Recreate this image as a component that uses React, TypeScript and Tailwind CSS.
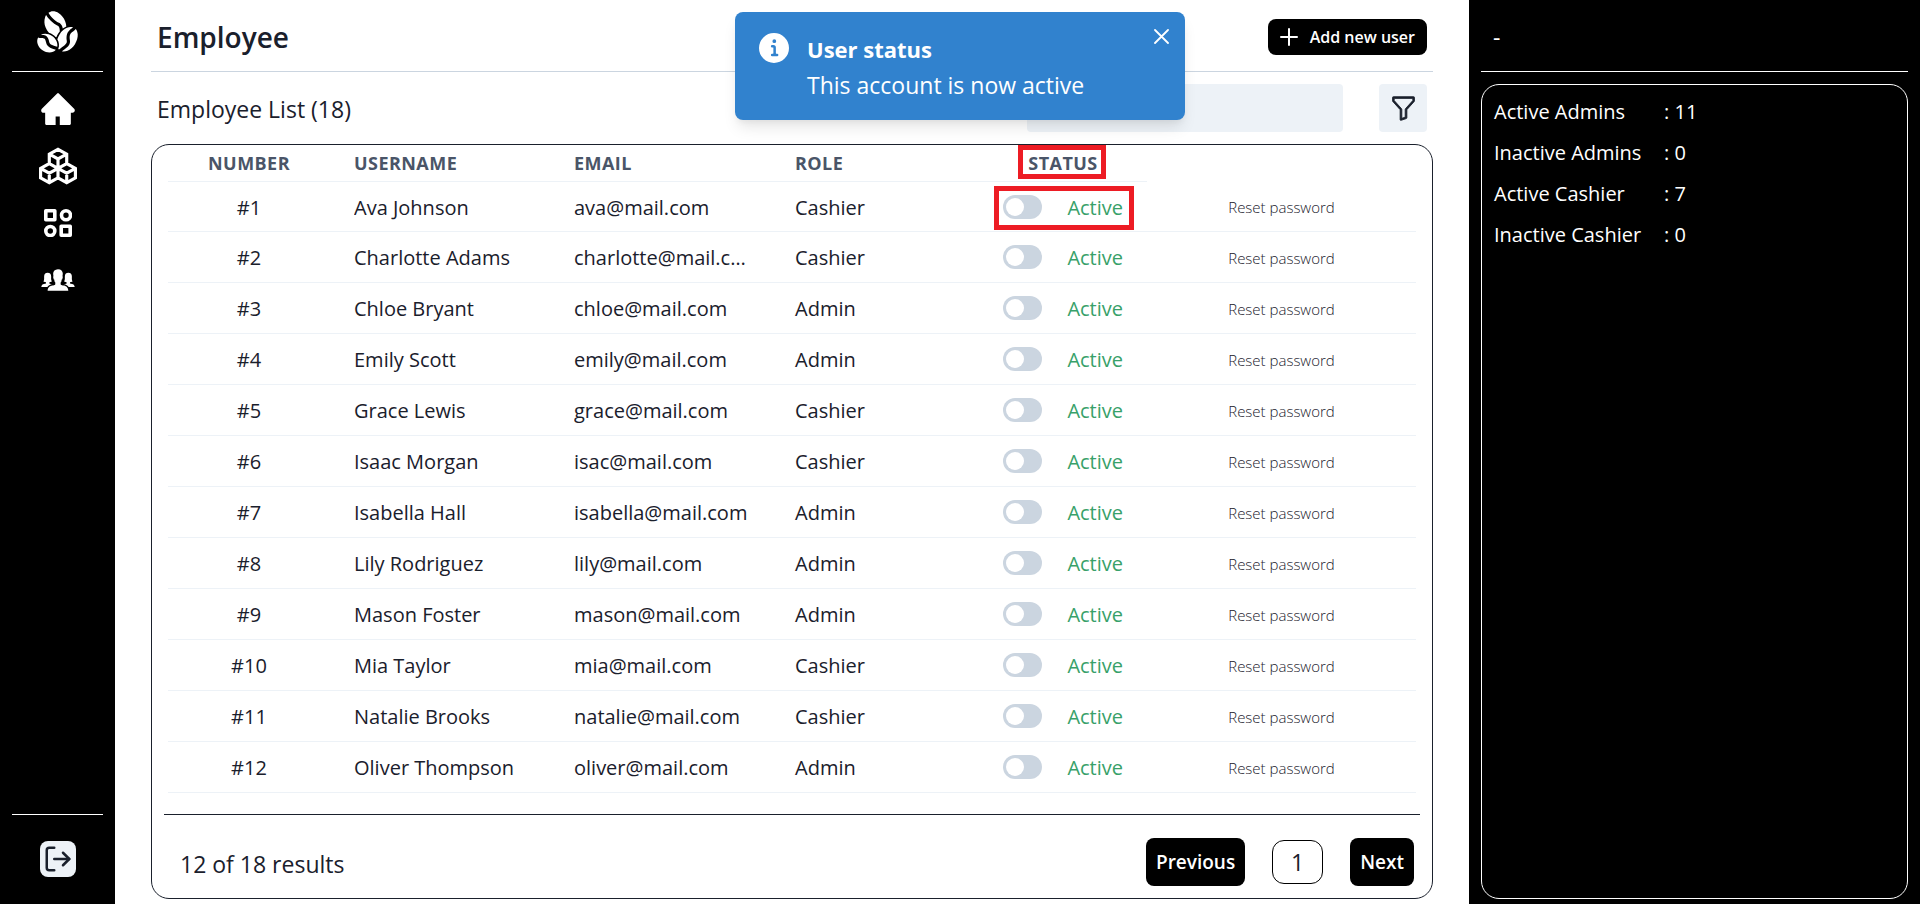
import React from "react";
import { GiCoffeeBeans } from "react-icons/gi";
import { AiFillHome } from "react-icons/ai";
import { GrCubes } from "react-icons/gr";
import { IoIosPeople } from "react-icons/io";
import { FiLogOut } from "react-icons/fi";
import { BsFunnel } from "react-icons/bs";

type Employee = { name: string; email: string; role: "Admin" | "Cashier" };

const employees: Employee[] = [
  { name: "Ava Johnson", email: "ava@mail.com", role: "Cashier" },
  { name: "Charlotte Adams", email: "charlotte@mail.com", role: "Cashier" },
  { name: "Chloe Bryant", email: "chloe@mail.com", role: "Admin" },
  { name: "Emily Scott", email: "emily@mail.com", role: "Admin" },
  { name: "Grace Lewis", email: "grace@mail.com", role: "Cashier" },
  { name: "Isaac Morgan", email: "isac@mail.com", role: "Cashier" },
  { name: "Isabella Hall", email: "isabella@mail.com", role: "Admin" },
  { name: "Lily Rodriguez", email: "lily@mail.com", role: "Admin" },
  { name: "Mason Foster", email: "mason@mail.com", role: "Admin" },
  { name: "Mia Taylor", email: "mia@mail.com", role: "Cashier" },
  { name: "Natalie Brooks", email: "natalie@mail.com", role: "Cashier" },
  { name: "Oliver Thompson", email: "oliver@mail.com", role: "Admin" },
];

const summary: [string, number][] = [
  ["Active Admins", 11],
  ["Inactive Admins", 0],
  ["Active Cashier", 7],
  ["Inactive Cashier", 0],
];

function CategoryIcon() {
  return (
    <svg viewBox="0 0 28 28" className="size-7" fill="none" stroke="currentColor" strokeWidth="3.6" strokeLinejoin="round" aria-hidden="true">
      <rect x="1.8" y="1.8" width="9" height="9" />
      <circle cx="22" cy="6.3" r="4.5" />
      <circle cx="6.3" cy="22" r="4.5" />
      <rect x="17.2" y="17.2" width="9" height="9" />
    </svg>
  );
}

function Sidebar() {
  return (
    <aside className="flex w-[115px] shrink-0 flex-col bg-black px-3 text-white">
      <div className="flex h-[72px] items-start justify-center border-b border-white pt-[9px]">
        <GiCoffeeBeans size={45} />
      </div>
      <nav className="flex flex-1 flex-col items-center gap-[17px] pt-[17px]">
        <a href="#home" aria-label="Home" className="flex h-10 items-center"><AiFillHome size={38} /></a>
        <a href="#products" aria-label="Products" className="flex h-10 items-center"><GrCubes size={38} /></a>
        <a href="#categories" aria-label="Categories" className="flex h-10 items-center"><CategoryIcon /></a>
        <a href="#employees" aria-label="Employees" className="flex h-10 items-center"><IoIosPeople size={38} /></a>
      </nav>
      <div className="flex h-[90px] items-start justify-center border-t border-white pt-[26px]">
        <button aria-label="Log out" className="flex size-9 items-center justify-center rounded-lg bg-[#edf2f7] text-[#1a202c]">
          <FiLogOut size={30} />
        </button>
      </div>
    </aside>
  );
}

function StatusSwitch({ name }: { name: string }) {
  return (
    <input
      type="checkbox"
      role="switch"
      aria-label={`Status of ${name}`}
      className="h-6 w-[39px] shrink-0 appearance-none rounded-full bg-[#cbd5e0] p-[3px] before:block before:size-[18px] before:rounded-full before:bg-white checked:bg-[#3182ce] checked:before:ml-auto"
    />
  );
}

const headCell = "h-[37px] border-b border-[#edf2f7] px-6 text-left align-middle text-[18px] font-bold tracking-wide";
const bodyCell = "border-b border-[#edf2f7] pl-6 pr-5 pt-0.5 align-middle";

function EmployeeTable() {
  return (
    <table className="w-full table-fixed border-separate border-spacing-0 text-xl leading-7">
      <colgroup>
        <col className="w-[162px]" />
        <col className="w-[220px]" />
        <col className="w-[221px]" />
        <col className="w-[208px]" />
        <col className="w-[168px]" />
        <col />
      </colgroup>
      <thead className="text-[#4a5568]">
        <tr>
          <th className={headCell}><div className="text-center">NUMBER</div></th>
          <th className={headCell}>USERNAME</th>
          <th className={headCell}>EMAIL</th>
          <th className={headCell}>ROLE</th>
          <th className={`${headCell} relative`}>
            <div className="text-center">STATUS</div>
            <span className="pointer-events-none absolute top-0 left-[39px] h-[34px] w-[88px] border-5 border-[#ed1c24]" />
          </th>
          <td />
        </tr>
      </thead>
      <tbody>
        {employees.map((e, i) => (
          <tr key={e.email} className="h-[51px] first:h-[50px]">
            <td className="border-b border-[#edf2f7] px-6 pt-0.5 text-center align-middle">#{i + 1}</td>
            <td className={bodyCell}><div className="truncate">{e.name}</div></td>
            <td className={bodyCell}><div className="truncate">{e.email}</div></td>
            <td className={bodyCell}>{e.role}</td>
            <td className="relative border-b border-[#edf2f7] px-6 align-middle">
              <div className="flex items-center justify-between">
                <StatusSwitch name={e.name} />
                <span className="pt-0.5 text-[#38a169]">Active</span>
              </div>
              {i === 0 && (
                <span className="pointer-events-none absolute top-1 left-[15px] h-11 w-[140px] border-5 border-[#ed1c24]" />
              )}
            </td>
            <td className="border-b border-[#edf2f7] text-center align-middle">
              <button className="text-[15px] font-light">Reset password</button>
            </td>
          </tr>
        ))}
      </tbody>
    </table>
  );
}

function Toast() {
  return (
    <div role="status" className="absolute top-3 left-1/2 z-10 flex h-[108px] w-[450px] -translate-x-1/2 gap-[18px] rounded-lg bg-[#3182ce] px-6 pt-[18px] text-white shadow-[0_10px_15px_-3px_rgba(0,0,0,0.1),0_4px_6px_-2px_rgba(0,0,0,0.05)]">
      <svg viewBox="0 0 24 24" className="mt-[3px] size-[30px] shrink-0" fill="currentColor" aria-hidden="true">
        <path d="M12,0A12,12,0,1,0,24,12,12.013,12.013,0,0,0,12,0Zm.25,5a1.5,1.5,0,1,1-1.5,1.5A1.5,1.5,0,0,1,12.25,5ZM14.5,18.5h-4a1,1,0,0,1,0-2h.75a.25.25,0,0,0,.25-.25v-4.5a.25.25,0,0,0-.25-.25H10.5a1,1,0,0,1,0-2h1a2,2,0,0,1,2,2v4.75a.25.25,0,0,0,.25.25h.75a1,1,0,1,1,0,2Z" />
      </svg>
      <div className="flex-1 pt-px">
        <p className="text-[22px] leading-9 font-bold">User status</p>
        <p className="text-[23px] leading-9">This account is now active</p>
      </div>
      <button aria-label="Close" className="absolute top-[17px] right-4 p-0">
        <svg viewBox="0 0 15 15" className="size-[15px]" stroke="currentColor" strokeWidth="1.8" strokeLinecap="round" aria-hidden="true">
          <path d="M1 1l13 13M14 1L1 14" />
        </svg>
      </button>
    </div>
  );
}

export default function App() {
  return (
    <div className="relative flex min-h-screen bg-white font-['Open_Sans','Noto_Sans',sans-serif] text-[#1a202c]">
      <Sidebar />
      <main className="flex min-w-0 flex-1 flex-col pr-9 pb-[5px] pl-9">
        <header className="flex h-[72px] items-center justify-between border-b border-[#cbd5e0] px-1.5 pt-0.5">
          <h1 className="text-[28px] font-semibold">Employee</h1>
          <button className="flex h-9 items-center gap-3 rounded-lg bg-black px-3 text-base font-semibold text-white">
            <svg viewBox="0 0 18 18" className="size-[18px]" stroke="currentColor" strokeWidth="2" strokeLinecap="round" aria-hidden="true">
              <path d="M9 1v16M1 9h16" />
            </svg>
            Add new user
          </button>
        </header>
        <div className="flex h-[72px] items-center justify-between px-1.5">
          <h2 className="pt-0.5 text-[23px]">Employee List (18)</h2>
          <div className="flex gap-9">
            <input type="search" aria-label="Search employees" className="h-12 w-[316px] rounded-sm bg-[#edf2f7] px-3" />
            <button aria-label="Filter" className="flex size-12 items-center justify-center rounded-sm bg-[#edf2f7]">
              <BsFunnel size={27} strokeWidth={0.5} />
            </button>
          </div>
        </div>
        <section className="flex flex-1 flex-col rounded-[18px] border border-[#1a202c] px-3">
          <div className="flex-1 px-1">
            <EmployeeTable />
          </div>
          <footer className="flex h-[84px] items-center justify-between border-t border-[#1a202c] pt-[11px] pr-1.5 pl-4">
            <p className="pt-1 text-[23px]">12 of 18 results</p>
            <div className="flex items-center gap-[27px] text-[19px] font-semibold">
              <button className="h-12 rounded-lg bg-black px-2.5 text-white">Previous</button>
              <span className="flex h-11 w-[51px] items-center justify-center rounded-xl border border-black text-[23px] font-normal">1</span>
              <button className="h-12 rounded-lg bg-black px-2.5 text-white">Next</button>
            </div>
          </footer>
        </section>
      </main>
      <aside className="flex w-[451px] shrink-0 flex-col bg-black px-3 pb-[5px] text-white">
        <div className="flex h-[72px] items-center border-b border-white px-3 pt-1 text-[23px]">-</div>
        <dl className="mt-3 flex-1 rounded-[18px] border border-white px-3 pt-1.5 text-xl">
          {summary.map(([label, count]) => (
            <div key={label} className="flex h-[41px] items-center">
              <dt className="w-[170px]">{label}</dt>
              <dd>: {count}</dd>
            </div>
          ))}
        </dl>
      </aside>
      <Toast />
    </div>
  );
}
